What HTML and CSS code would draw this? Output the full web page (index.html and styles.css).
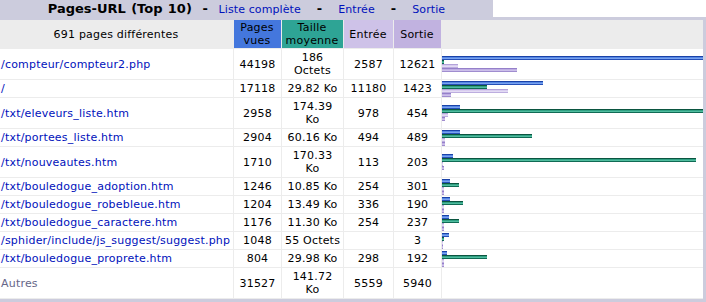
FILE: index.html
```html
<!DOCTYPE html>
<html lang="fr">
<head>
<meta charset="utf-8">
<title>Pages-URL (Top 10)</title>
<link rel="stylesheet" href="styles.css">
</head>
<body>
<div class="section">
  <div class="title-row">
    <div class="title">Pages-URL (Top 10)&nbsp; -&nbsp; <a href="#">Liste complète</a> &nbsp; - &nbsp; <a href="#">Entrée</a> &nbsp; - &nbsp; <a href="#">Sortie</a></div>
    <div class="blank"></div>
  </div>
  <div class="frame">
    <table class="data">
      <thead>
        <tr>
          <th class="c-url">691 pages différentes</th>
          <th class="c-p h-p">Pages<br>vues</th>
          <th class="c-k h-k">Taille<br>moyenne</th>
          <th class="c-e h-e">Entrée</th>
          <th class="c-x h-x">Sortie</th>
          <th class="c-bars"></th>
        </tr>
      </thead>
      <tbody>
        <tr>
          <td class="url"><a href="#">/compteur/compteur2.php</a></td>
          <td>44198</td><td>186<br>Octets</td><td>2587</td><td>12621</td>
          <td class="bars"><div class="bar bp" style="width:261px"></div><div class="bar bk" style="width:2px"></div><div class="bar be" style="width:16px"></div><div class="bar bx" style="width:75px"></div></td>
        </tr>
        <tr>
          <td class="url"><a href="#">/</a></td>
          <td>17118</td><td>29.82 Ko</td><td>11180</td><td>1423</td>
          <td class="bars"><div class="bar bp" style="width:101px"></div><div class="bar bk" style="width:45px"></div><div class="bar be" style="width:66px"></div><div class="bar bx" style="width:9px"></div></td>
        </tr>
        <tr>
          <td class="url"><a href="#">/txt/eleveurs_liste.htm</a></td>
          <td>2958</td><td>174.39<br>Ko</td><td>978</td><td>454</td>
          <td class="bars"><div class="bar bp" style="width:18px"></div><div class="bar bk" style="width:261px"></div><div class="bar be" style="width:6px"></div><div class="bar bx" style="width:3px"></div></td>
        </tr>
        <tr>
          <td class="url"><a href="#">/txt/portees_liste.htm</a></td>
          <td>2904</td><td>60.16 Ko</td><td>494</td><td>489</td>
          <td class="bars"><div class="bar bp" style="width:18px"></div><div class="bar bk" style="width:90px"></div><div class="bar be" style="width:3px"></div><div class="bar bx" style="width:3px"></div></td>
        </tr>
        <tr>
          <td class="url"><a href="#">/txt/nouveautes.htm</a></td>
          <td>1710</td><td>170.33<br>Ko</td><td>113</td><td>203</td>
          <td class="bars"><div class="bar bp" style="width:11px"></div><div class="bar bk" style="width:254px"></div><div class="bar be" style="width:1px"></div><div class="bar bx" style="width:2px"></div></td>
        </tr>
        <tr>
          <td class="url"><a href="#">/txt/bouledogue_adoption.htm</a></td>
          <td>1246</td><td>10.85 Ko</td><td>254</td><td>301</td>
          <td class="bars"><div class="bar bp" style="width:8px"></div><div class="bar bk" style="width:17px"></div><div class="bar be" style="width:2px"></div><div class="bar bx" style="width:2px"></div></td>
        </tr>
        <tr>
          <td class="url"><a href="#">/txt/bouledogue_robebleue.htm</a></td>
          <td>1204</td><td>13.49 Ko</td><td>336</td><td>190</td>
          <td class="bars"><div class="bar bp" style="width:8px"></div><div class="bar bk" style="width:21px"></div><div class="bar be" style="width:2px"></div><div class="bar bx" style="width:2px"></div></td>
        </tr>
        <tr>
          <td class="url"><a href="#">/txt/bouledogue_caractere.htm</a></td>
          <td>1176</td><td>11.30 Ko</td><td>254</td><td>237</td>
          <td class="bars"><div class="bar bp" style="width:7px"></div><div class="bar bk" style="width:17px"></div><div class="bar be" style="width:2px"></div><div class="bar bx" style="width:2px"></div></td>
        </tr>
        <tr>
          <td class="url"><a href="#">/sphider/include/js_suggest/suggest.php</a></td>
          <td>1048</td><td>55 Octets</td><td></td><td>3</td>
          <td class="bars"><div class="bar bp" style="width:7px"></div><div class="bar bk" style="width:2px"></div><div class="bar be" style="width:1px"></div><div class="bar bx" style="width:1px"></div></td>
        </tr>
        <tr>
          <td class="url"><a href="#">/txt/bouledogue_proprete.htm</a></td>
          <td>804</td><td>29.98 Ko</td><td>298</td><td>192</td>
          <td class="bars"><div class="bar bp" style="width:5px"></div><div class="bar bk" style="width:45px"></div><div class="bar be" style="width:2px"></div><div class="bar bx" style="width:2px"></div></td>
        </tr>
        <tr>
          <td class="url other">Autres</td>
          <td>31527</td><td>141.72<br>Ko</td><td>5559</td><td>5940</td>
          <td class="bars"></td>
        </tr>
      </tbody>
    </table>
  </div>
</div>
</body>
</html>
```

FILE: styles.css
```css
* {
  box-sizing: border-box;
}

body {
  margin: 0;
  background: #ffffff;
  color: #000000;
  font: 11px "DejaVu Sans", Verdana, sans-serif;
  letter-spacing: 0.2px;
}

a {
  color: #0011bb;
  text-decoration: none;
}

.title-row {
  display: flex;
  height: 17px;
}

.title {
  width: 493px;
  background: #ccccdd;
  text-align: center;
  font-size: 13px;
  font-weight: bold;
  letter-spacing: 0;
  word-spacing: 0.8px;
  line-height: 17px;
  white-space: nowrap;
}

.title a {
  font-size: 11px;
  font-weight: normal;
  letter-spacing: 0.1px;
  word-spacing: 0;
}

.blank {
  flex: 1;
  background: #ffffff;
}

.frame {
  background: #ccccdd;
  padding: 3px 3px 3px 0;
}

.data {
  width: 703px;
  table-layout: fixed;
  border-collapse: separate;
  border-spacing: 0;
  background: #ffffff;
}

.data th,
.data td {
  padding: 2px;
  border-right: 1px solid #ececec;
  border-bottom: 1px solid #ececec;
  text-align: center;
  vertical-align: middle;
  font-weight: normal;
  line-height: 13px;
  white-space: nowrap;
}

.data thead tr {
  background: #ececec;
}

.data th {
  padding: 1px 2px 1px 1px;
}

.data th:last-child,
.data td:last-child {
  border-right: 0;
}

.c-url { width: 234px; }
.c-p { width: 48px; }
.c-k { width: 62px; }
.c-e { width: 50px; }
.c-x { width: 48px; }
.c-bars { width: 261px; }

.h-p { background: #4477dd; }
.h-k { background: #2ea495; }
.h-e { background: #cec2e8; }
.h-x { background: #c1b2e0; }

.data td.url {
  text-align: left;
  padding-left: 1px;
  padding-right: 0;
  overflow: hidden;
}

.data td.other {
  color: #666688;
}

.data td.bars {
  padding: 0;
  text-align: left;
}

.bar {
  height: 4px;
}

.bp {
  background: linear-gradient(to bottom, #1a42a8 0 1px, #5587e4 1px 2px, #79a2ef 2px 3px, #2550b8 3px 4px);
}

.bk {
  background: linear-gradient(to bottom, #0b5540 0 1px, #31a083 1px 2px, #50bd9f 2px 3px, #106b55 3px 4px);
}

.be {
  background: linear-gradient(to bottom, #b3a2d9 0 1px, #d8cdef 1px 2px, #e3dbf4 2px 3px, #bcaddf 3px 4px);
}

.bx {
  background: linear-gradient(to bottom, #9580c9 0 1px, #bfaee4 1px 2px, #cdc0ea 2px 3px, #a08dcf 3px 4px);
}
```
